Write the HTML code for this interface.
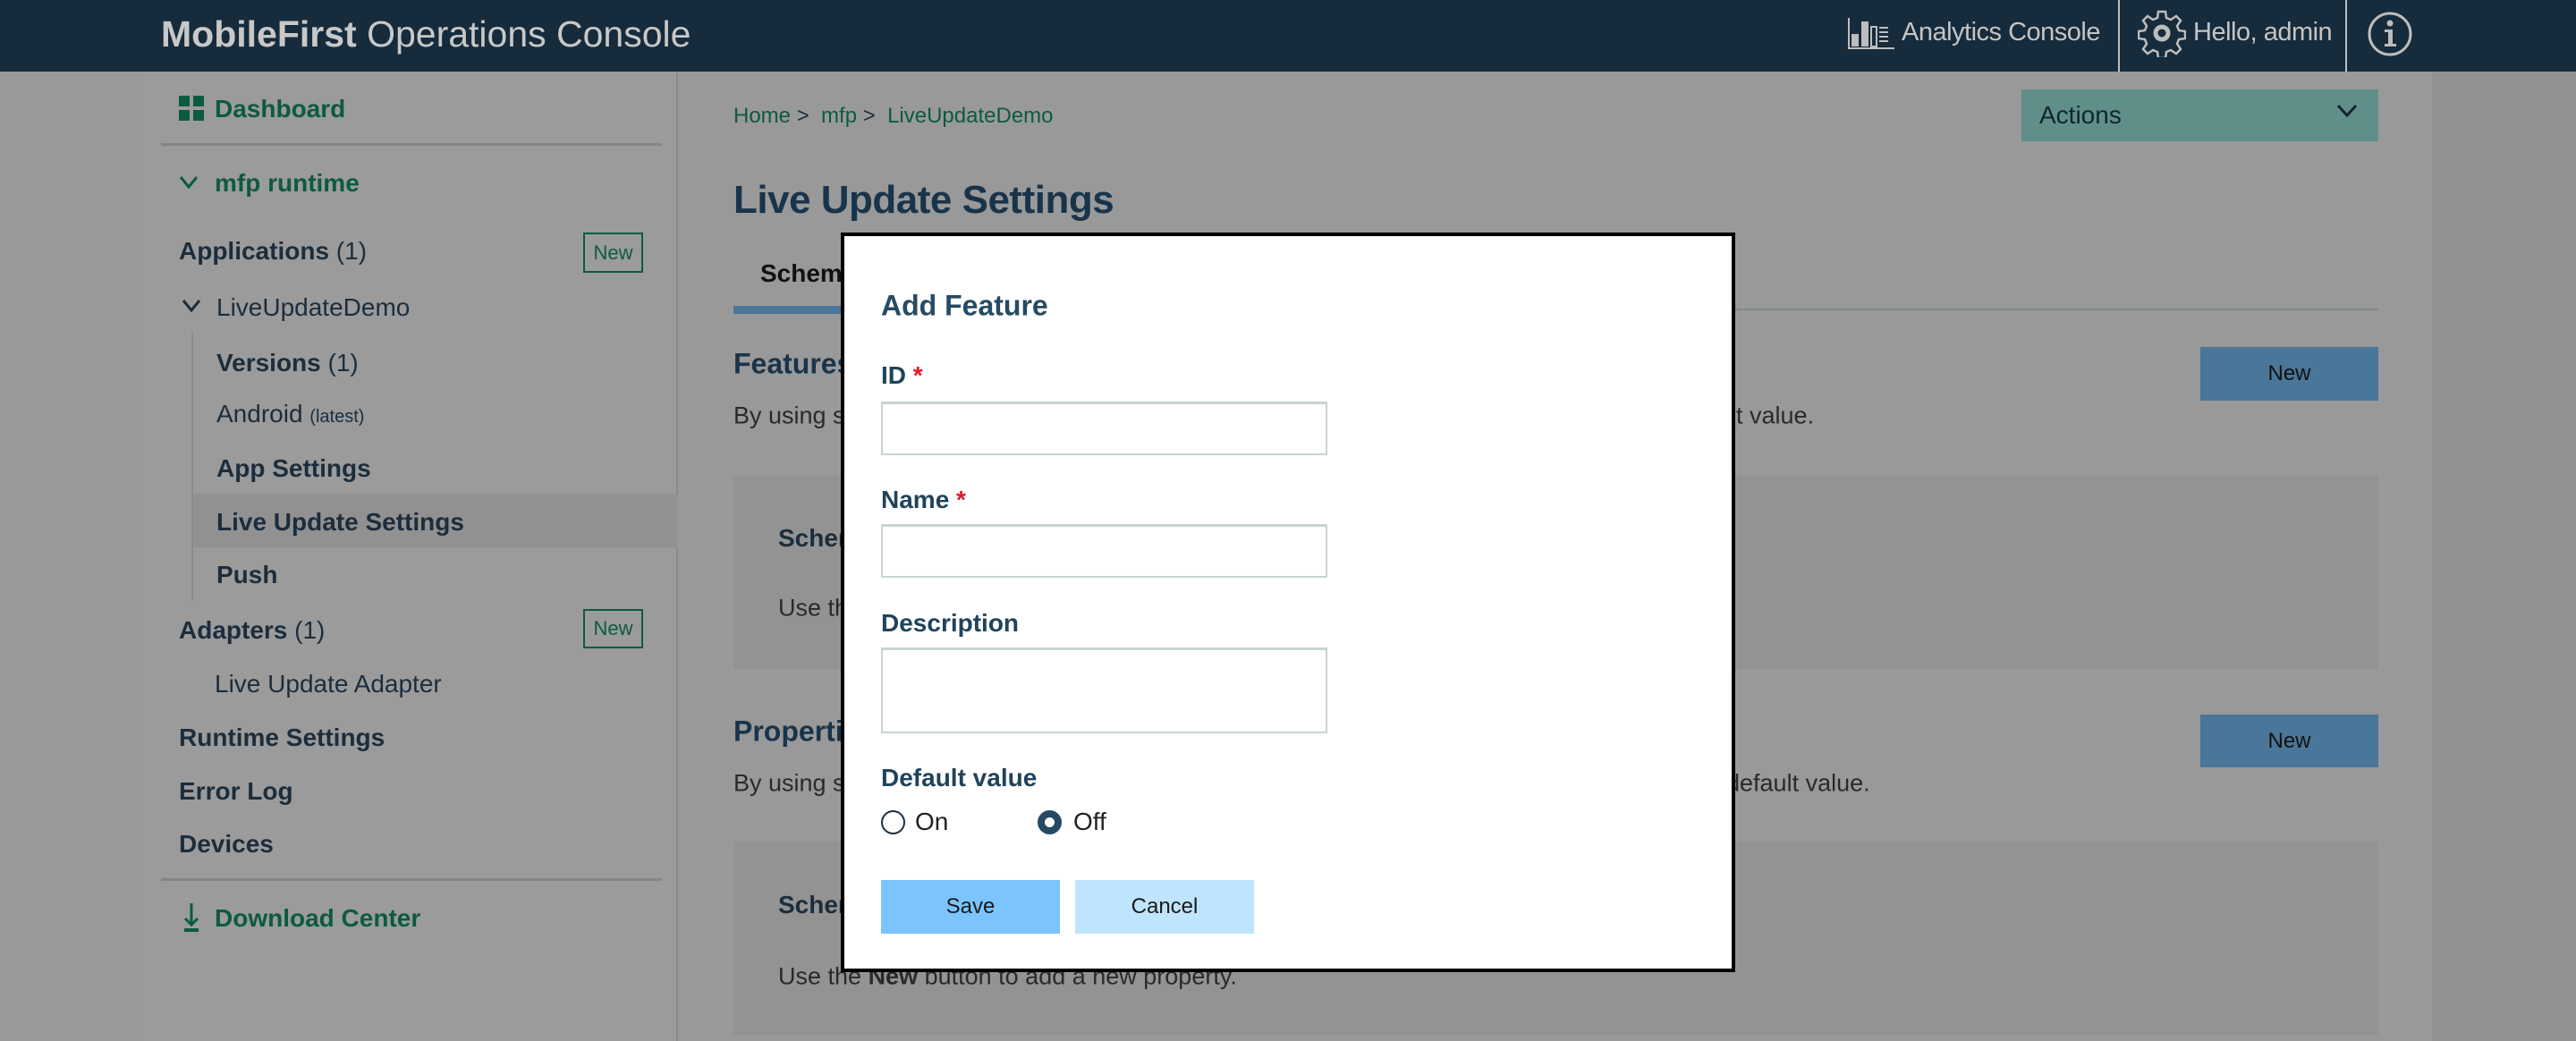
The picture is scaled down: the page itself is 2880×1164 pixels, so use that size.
<!DOCTYPE html>
<html><head><meta charset="utf-8"><style>
*{margin:0;padding:0;box-sizing:border-box}
body{width:2880px;height:1164px;overflow:hidden;background:#999;font-family:"Liberation Sans",Arial,sans-serif;position:relative;color:#1e2e3b}
.a{position:absolute;white-space:nowrap}
.hdr{left:0;top:0;width:2880px;height:80px;background:#162b3b}
.b{font-weight:bold}
.side{left:160px;top:80px;width:598px;height:1084px;background:#9b9b9b;border-right:2px solid #8a8a8a}
.si{font-size:28px;font-weight:bold;color:#1c2d3c;transform:translateY(-50%)}
.g{color:#0c5a42}
.nb{border:2px solid #0c5a42;color:#0c5a42;font-size:22px;display:flex;align-items:center;justify-content:center}
.t{font-size:27px;color:#2a2a2a;transform:translateY(-50%)}
.lbl{font-size:28px;font-weight:bold;color:#20435b;transform:translateY(-50%)}
.req{color:#e0182d}
.inp{background:#fff;border:2px solid #c8d3d4;border-top-width:3px}
</style></head><body>
<div class="a hdr"></div>
<div class="a" style="left:180px;top:15px;font-size:41px;color:#c8c8c8"><b>MobileFirst</b> Operations Console</div>
<svg class="a" style="left:2066px;top:16px" width="52" height="40" viewBox="0 0 52 40"><g fill="#bdbdbd"><rect x="4" y="22" width="8" height="14"/><rect x="15" y="8" width="8" height="28"/><rect x="26" y="14" width="6" height="22" fill="none" stroke="#bdbdbd" stroke-width="2"/><rect x="35" y="14" width="10" height="2"/><rect x="35" y="19" width="10" height="2"/><rect x="35" y="24" width="10" height="2"/><rect x="35" y="29" width="10" height="2"/><rect x="0" y="37" width="52" height="2"/><rect x="0" y="4" width="2" height="35"/></g></svg>
<div class="a" style="left:2126px;top:20px;font-size:29px;color:#c4c4c4;letter-spacing:-0.5px">Analytics Console</div>
<div class="a" style="left:2368px;top:0;width:2px;height:80px;background:#bfbfbf"></div>
<svg class="a" style="left:2390px;top:10px" width="54" height="54" viewBox="0 0 54 54"><path d="M23 3h8l1 7 5 2 6-4 5 5-4 6 2 5 7 1v8l-7 1-2 5 4 6-5 5-6-4-5 2-1 7h-8l-1-7-5-2-6 4-5-5 4-6-2-5-7-1v-8l7-1 2-5-4-6 5-5 6 4 5-2z" fill="none" stroke="#bdbdbd" stroke-width="2.5"/><circle cx="27" cy="27" r="7" fill="none" stroke="#bdbdbd" stroke-width="5"/></svg>
<div class="a" style="left:2452px;top:20px;font-size:29px;color:#c4c4c4;letter-spacing:-0.5px">Hello, admin</div>
<div class="a" style="left:2622px;top:0;width:2px;height:80px;background:#bfbfbf"></div>
<svg class="a" style="left:2646px;top:12px" width="52" height="52" viewBox="0 0 52 52"><circle cx="26" cy="26" r="23" fill="none" stroke="#bdbdbd" stroke-width="3"/><circle cx="26" cy="14" r="3.5" fill="#bdbdbd"/><path d="M20 21h9v16h4v3H20v-3h4V24h-4z" fill="#bdbdbd"/></svg>

<div class="a" style="left:2719px;top:80px;width:161px;height:1084px;background:#929292"></div>
<div class="a side"></div>
<svg class="a" style="left:200px;top:107px" width="28" height="28" viewBox="0 0 28 28" fill="#0c5a42"><rect x="0" y="0" width="12" height="12"/><rect x="16" y="0" width="12" height="12"/><rect x="0" y="16" width="12" height="12"/><rect x="16" y="16" width="12" height="12"/></svg>
<div class="a si g" style="left:240px;top:122px">Dashboard</div>
<div class="a" style="left:180px;top:160px;width:560px;height:3px;background:#858585"></div>
<svg class="a" style="left:200px;top:196px" width="22" height="16" viewBox="0 0 22 16"><path d="M2 2l9 11 9-11" fill="none" stroke="#0c5a42" stroke-width="3"/></svg>
<div class="a si g" style="left:240px;top:205px">mfp runtime</div>
<div class="a si" style="left:200px;top:281px">Applications <span style="font-weight:normal">(1)</span></div>
<div class="a nb" style="left:652px;top:260px;width:67px;height:45px">New</div>
<svg class="a" style="left:203px;top:334px" width="22" height="16" viewBox="0 0 22 16"><path d="M2 2l9 11 9-11" fill="none" stroke="#1c2d3c" stroke-width="3"/></svg>
<div class="a si" style="left:242px;top:344px;font-weight:normal">LiveUpdateDemo</div>
<div class="a" style="left:214px;top:372px;width:2px;height:300px;background:#8a8a8a"></div>
<div class="a si" style="left:242px;top:406px">Versions <span style="font-weight:normal">(1)</span></div>
<div class="a si" style="left:242px;top:463px;font-weight:normal">Android <span style="font-size:20px">(latest)</span></div>
<div class="a si" style="left:242px;top:524px">App Settings</div>
<div class="a" style="left:216px;top:552px;width:542px;height:60px;background:#919191"></div>
<div class="a si" style="left:242px;top:584px">Live Update Settings</div>
<div class="a si" style="left:242px;top:643px">Push</div>
<div class="a si" style="left:200px;top:705px">Adapters <span style="font-weight:normal">(1)</span></div>
<div class="a nb" style="left:652px;top:681px;width:67px;height:44px">New</div>
<div class="a si" style="left:240px;top:765px;font-weight:normal">Live Update Adapter</div>
<div class="a si" style="left:200px;top:825px">Runtime Settings</div>
<div class="a si" style="left:200px;top:885px">Error Log</div>
<div class="a si" style="left:200px;top:944px">Devices</div>
<div class="a" style="left:180px;top:982px;width:560px;height:3px;background:#858585"></div>
<svg class="a" style="left:204px;top:1010px" width="20" height="32" viewBox="0 0 20 32"><path d="M10 0v24M3 17l7 7 7-7" fill="none" stroke="#0c5a42" stroke-width="3"/><rect x="2" y="28" width="16" height="4" fill="#0c5a42"/></svg>
<div class="a si g" style="left:240px;top:1027px">Download Center</div>

<div class="a" style="left:820px;top:130px;font-size:24px;color:#0c5a42;transform:translateY(-50%)">Home <span style="color:#1c2d3c">&gt;</span> &nbsp;mfp <span style="color:#1c2d3c">&gt;</span> &nbsp;LiveUpdateDemo</div>
<div class="a" style="left:820px;top:224px;font-size:44px;font-weight:bold;color:#19344a;transform:translateY(-50%);letter-spacing:-0.5px">Live Update Settings</div>
<div class="a" style="left:2260px;top:100px;width:399px;height:58px;background:#5f8f88"></div>
<div class="a" style="left:2280px;top:129px;font-size:28px;color:#12242f;transform:translateY(-50%)">Actions</div>
<svg class="a" style="left:2612px;top:116px" width="24" height="16" viewBox="0 0 24 16"><path d="M2 2l10 11 10-11" fill="none" stroke="#12242f" stroke-width="3"/></svg>
<div class="a" style="left:850px;top:306px;font-size:28px;font-weight:bold;color:#111;transform:translateY(-50%)">Schema</div>
<div class="a" style="left:820px;top:345px;width:1839px;height:2px;background:#808888"></div>
<div class="a" style="left:820px;top:342px;width:160px;height:9px;background:#4a7699"></div>
<div class="a" style="left:820px;top:407px;font-size:32px;font-weight:bold;color:#19344a;transform:translateY(-50%)">Features</div>
<div class="a" style="left:2460px;top:388px;width:199px;height:60px;background:#4a7699;font-size:24px;color:#111;display:flex;align-items:center;justify-content:center">New</div>
<div class="a t" style="left:820px;top:465px">By using s</div>
<div class="a t" style="left:1920px;top:465px">ult value.</div>
<div class="a" style="left:820px;top:532px;width:1839px;height:216px;background:#939393"></div>
<div class="a" style="left:870px;top:602px;font-size:28px;font-weight:bold;color:#1c2d3c;transform:translateY(-50%)">Schema</div>
<div class="a t" style="left:870px;top:680px">Use the</div>
<div class="a" style="left:820px;top:818px;font-size:32px;font-weight:bold;color:#19344a;transform:translateY(-50%)">Properties</div>
<div class="a" style="left:2460px;top:799px;width:199px;height:59px;background:#4a7699;font-size:24px;color:#111;display:flex;align-items:center;justify-content:center">New</div>
<div class="a t" style="left:820px;top:876px">By using s</div>
<div class="a t" style="left:1930px;top:876px">default value.</div>
<div class="a" style="left:820px;top:941px;width:1839px;height:216px;background:#939393"></div>
<div class="a" style="left:870px;top:1012px;font-size:28px;font-weight:bold;color:#1c2d3c;transform:translateY(-50%)">Schema</div>
<div class="a t" style="left:870px;top:1092px">Use the <b>New</b> button to add a new property.</div>

<div class="a" style="left:940px;top:260px;width:1000px;height:827px;background:#fff;border:4px solid #000"></div>
<div class="a" style="left:985px;top:342px;font-size:32px;font-weight:bold;color:#264a63;transform:translateY(-50%)">Add Feature</div>
<div class="a lbl" style="left:985px;top:420px">ID <span class="req">*</span></div>
<div class="a inp" style="left:985px;top:449px;width:499px;height:60px"></div>
<div class="a lbl" style="left:985px;top:559px">Name <span class="req">*</span></div>
<div class="a inp" style="left:985px;top:586px;width:499px;height:60px"></div>
<div class="a lbl" style="left:985px;top:697px">Description</div>
<div class="a inp" style="left:985px;top:724px;width:499px;height:96px"></div>
<div class="a lbl" style="left:985px;top:870px">Default value</div>
<div class="a" style="left:985px;top:906px;width:27px;height:27px;border-radius:50%;border:2px solid #1c2d3c"></div>
<div class="a" style="left:1023px;top:919px;font-size:28px;color:#222;transform:translateY(-50%)">On</div>
<div class="a" style="left:1160px;top:906px;width:27px;height:27px;border-radius:50%;border:8px solid #264a63;background:#fff"></div>
<div class="a" style="left:1200px;top:919px;font-size:28px;color:#222;transform:translateY(-50%)">Off</div>
<div class="a" style="left:985px;top:984px;width:200px;height:60px;background:#7cc4fd;font-size:24px;color:#1a1a1a;display:flex;align-items:center;justify-content:center">Save</div>
<div class="a" style="left:1202px;top:984px;width:200px;height:60px;background:#bfe4fe;font-size:24px;color:#1a1a1a;display:flex;align-items:center;justify-content:center">Cancel</div>
</body></html>
